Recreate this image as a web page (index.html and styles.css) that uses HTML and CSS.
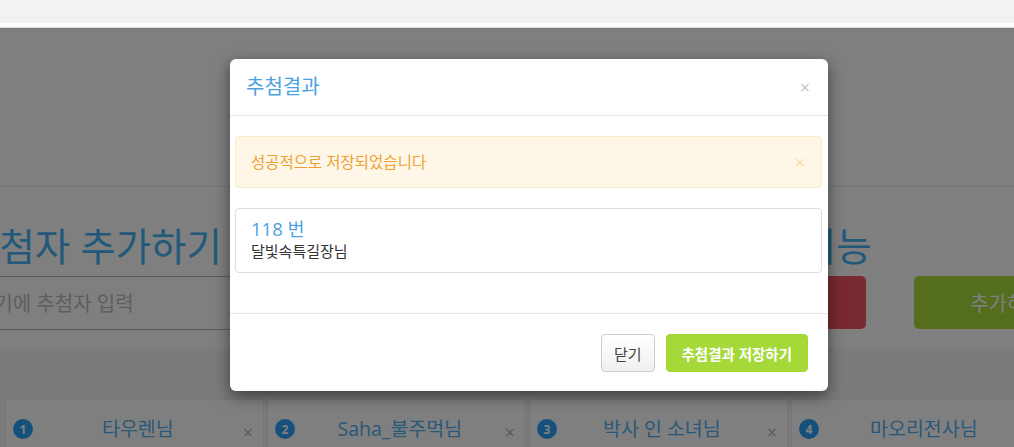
FILE: index.html
```html
<!DOCTYPE html>
<html lang="ko">
<head>
<meta charset="utf-8">
<title>추첨결과</title>
<link rel="stylesheet" href="styles.css">
</head>
<body>
<header class="topbar"><div class="strip"></div></header>
<main class="stage">
  <div class="page">
    <div class="hero"></div>
    <section class="work">
      <div class="col-add">
        <h2 class="sec-title">추첨자 추가하기</h2>
        <input class="name-input" type="text" placeholder="여기에 추첨자 입력">
      </div>
      <div class="col-func">
        <h2 class="sec-title">추첨 기능</h2>
        <div class="func-btns">
          <button class="big-btn red">초기화</button>
          <button class="big-btn green">추가하기</button>
        </div>
      </div>
    </section>
    <section class="list">
      <div class="card"><span class="badge">1</span><span class="name">타우렌님</span><span class="x">×</span></div>
      <div class="card"><span class="badge">2</span><span class="name">Saha_불주먹님</span><span class="x">×</span></div>
      <div class="card"><span class="badge">3</span><span class="name">박사 인 소녀님</span><span class="x">×</span></div>
      <div class="card"><span class="badge">4</span><span class="name">마오리전사님</span><span class="x">×</span></div>
    </section>
  </div>
  <div class="backdrop"></div>
  <div class="modal">
    <div class="modal-header">
      <h4 class="modal-title">추첨결과</h4>
      <button class="close">×</button>
    </div>
    <div class="modal-body">
      <div class="alert">
        <span>성공적으로 저장되었습니다</span>
        <button class="alert-close">×</button>
      </div>
      <div class="result">
        <h4 class="result-num">118 번</h4>
        <div class="result-name">달빛속특길장님</div>
      </div>
    </div>
    <div class="modal-footer">
      <button class="btn btn-default">닫기</button>
      <button class="btn btn-save">추첨결과 저장하기</button>
    </div>
  </div>
</main>
</body>
</html>
```

FILE: styles.css
```css
* { box-sizing: border-box; }
html, body { margin: 0; padding: 0; overflow: hidden; }
body {
  font-family: "Open Sans", "Noto Sans CJK KR", sans-serif;
  color: #333;
  background: #fff;
  width: 1014px;
  height: 447px;
}
button { font-family: inherit; }

.topbar {
  background: #fff;
  padding-bottom: 4px;
  border-bottom: 1px solid #d9d9d9;
}
.topbar .strip { height: 23px; background: #f1f2f4; }

.stage {
  position: relative;
  height: 419px;
  overflow: hidden;
}

.page { width: 1014px; }
.hero {
  height: 159px;
  border-bottom: 1px solid #e8e8e8;
}

.work {
  display: flex;
  align-items: flex-start;
  margin-left: -36px;
  padding-top: 38px;
}
.sec-title {
  margin: 0 0 8px;
  font-size: 38.5px;
  line-height: 43px;
  font-weight: normal;
  color: #44b2f4;
  white-space: nowrap;
}
.col-add { flex: none; width: 266px; }
.name-input {
  display: block;
  width: 266px;
  height: 54px;
  border: solid #b4b4b4;
  border-width: 1px 0;
  padding: 0 12px;
  font-family: inherit;
  font-size: 20px;
  background: #fff;
  outline: none;
}
.name-input::placeholder { color: #bcbcbc; }

.col-func { flex: none; margin-left: 490px; }
.func-btns { display: flex; gap: 48px; }
.big-btn {
  height: 53px;
  border: 0;
  border-radius: 5px;
  color: #fff;
  font-size: 20px;
}
.big-btn.red { width: 146px; background: #f25462; }
.big-btn.green { width: 186px; background: #a8dc3a; }

.list {
  margin-top: 19px;
  background: #f5f5f5;
  padding: 50px 5px 0;
  display: flex;
  gap: 3px;
  height: 120px;
}
.card {
  flex: none;
  width: 259px;
  background: #fff;
  border: 1px solid #ececec;
  padding: 11px 10px 21px 7px;
  display: flex;
  align-items: center;
}
.badge {
  flex: none;
  width: 20px;
  height: 20px;
  border-radius: 50%;
  background: #2aa0f8;
  color: #fff;
  font-size: 12px;
  font-weight: bold;
  display: flex;
  align-items: center;
  justify-content: center;
}
.name {
  flex: 1;
  text-align: center;
  font-size: 19.5px;
  line-height: 24px;
  color: #55b0f0;
  white-space: nowrap;
}
.x {
  flex: none;
  font-size: 18px;
  line-height: 1;
  color: #b5b5b5;
  margin-top: 6px;
}

.backdrop {
  position: absolute;
  inset: 0;
  background: rgba(0, 0, 0, 0.5);
}

.modal {
  position: absolute;
  top: 31px;
  left: 230px;
  width: 598px;
  background: #fff;
  border-radius: 6px;
  box-shadow: 0 5px 15px rgba(0, 0, 0, 0.5);
}
.modal-header {
  display: flex;
  justify-content: space-between;
  align-items: center;
  padding: 15px 18px 15px 16px;
  border-bottom: 1px solid #e5e5e5;
}
.modal-title {
  margin: 0;
  font-size: 20px;
  line-height: 26px;
  font-weight: normal;
  color: #4aa3df;
}
.close, .alert-close {
  background: none;
  border: 0;
  padding: 0;
  font-size: 18px;
  line-height: 1;
  cursor: pointer;
}
.close { color: #c4c4c4; }

.modal-body { padding: 20px 6px 20px 5px; }
.alert {
  display: flex;
  justify-content: space-between;
  align-items: center;
  padding: 15px 16px 15px 15px;
  background: #fef7e7;
  border: 1px solid #fbebcd;
  border-radius: 4px;
  color: #f0a032;
  font-size: 15.5px;
  line-height: 20px;
  margin-bottom: 20px;
}
.alert-close { color: #f8dcaa; }

.result {
  border: 1px solid #dddddd;
  border-radius: 4px;
  padding: 8px 15px 11px;
  margin-bottom: 20px;
}
.result-num {
  margin: 0;
  font-size: 18.5px;
  line-height: 24px;
  font-weight: normal;
  color: #4aa3df;
}
.result-name {
  font-size: 15px;
  line-height: 20px;
  color: #333;
}

.modal-footer {
  display: flex;
  justify-content: flex-end;
  gap: 11px;
  padding: 20px 20px 19px;
  border-top: 1px solid #e5e5e5;
}
.btn {
  height: 38px;
  border-radius: 4px;
  font-size: 15px;
  padding: 0 12px;
}
.btn-default {
  background: linear-gradient(#ffffff, #f0f0f0);
  border: 1px solid #cccccc;
  color: #444;
}
.btn-save {
  background: #a5d93a;
  border: 1px solid #a2d637;
  color: #fff;
  font-weight: bold;
  font-size: 14.5px;
  padding: 0 15px;
}
```
